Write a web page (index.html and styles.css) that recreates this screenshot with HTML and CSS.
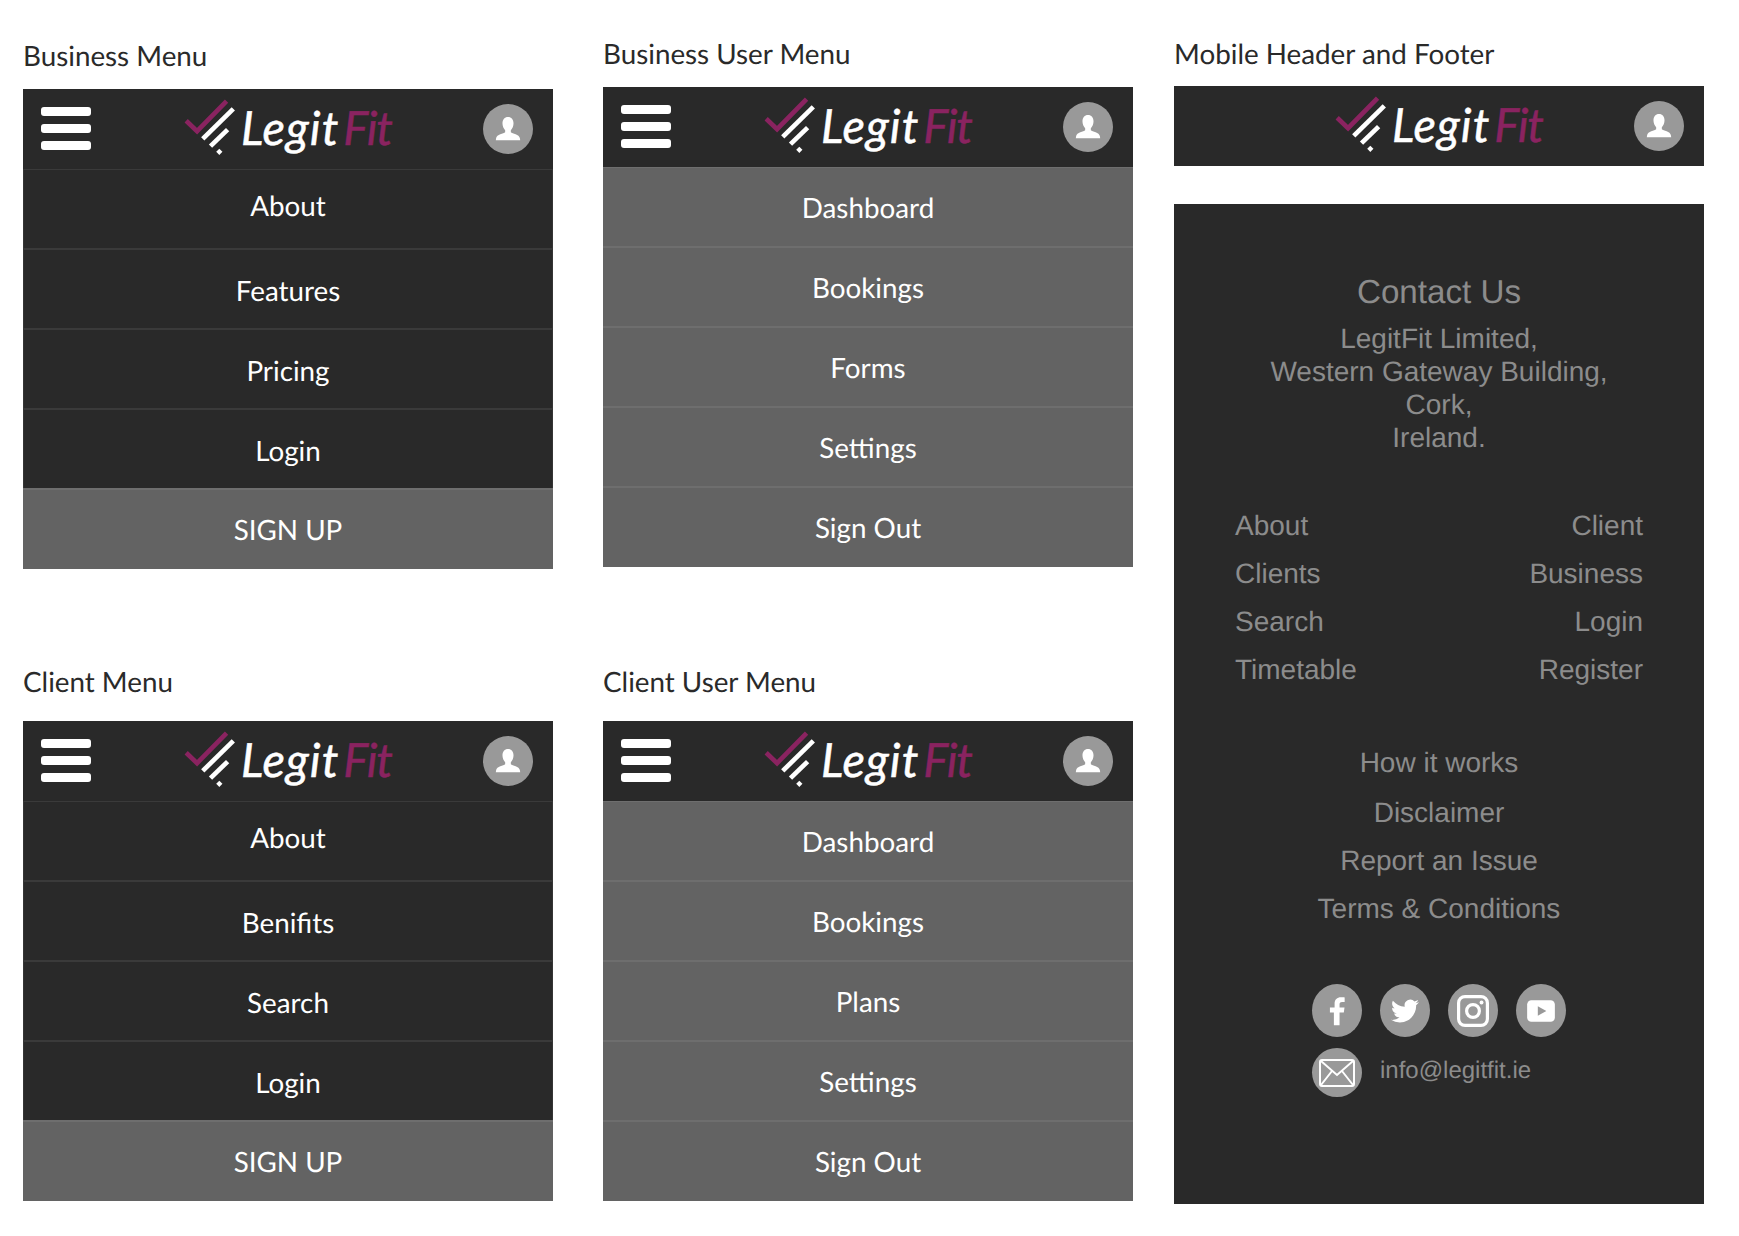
FILE: index.html
```html
<!DOCTYPE html>
<html lang="en">

<head>
    <meta charset="UTF-8">
    <title>LegitFit Menus</title>
    <link rel="stylesheet" href="styles.css">
</head>

<body>
    <svg class="defs" width="0" height="0">
        <symbol id="mark" viewBox="0 0 50 56">
            <path d="M2 22 L12.500 32 L41 3" fill="none" stroke="#8a2360" stroke-width="4.500" />
            <path d="M18 39.500 L47.500 10.500" fill="none" stroke="#fff" stroke-width="4.500" />
            <path d="M25.500 46.500 L42 30.500" fill="none" stroke="#fff" stroke-width="4.500" />
            <path d="M34 49 L37 52 L34 55 L31 52 Z" fill="#fff" />
        </symbol>
        <symbol id="person" viewBox="0 0 24 24">
            <path d="M12 3.500c-2.400 0-3.900 1.900-3.900 4.500 0 2 .8 3.700 1.900 4.800v1.500c-1 1-6 1.500-6.400 4.200l-.2 1.500h17.200l-.2-1.500c-.4-2.700-5.400-3.200-6.400-4.200v-1.500c1.100-1.100 1.900-2.800 1.900-4.800 0-2.600-1.500-4.500-3.900-4.500z" fill="#fff" />
        </symbol>
    </svg>

    <div class="page">
        <div class="col col-one">
            <h2 class="label">Business Menu</h2>
            <div class="panel">
                <header class="bar">
                    <div class="burger"><span></span><span></span><span></span></div>
                    <div class="logo">
                        <svg class="mark"><use href="#mark" /></svg>
                        <span class="legit">Legit</span><span class="fit">Fit</span>
                    </div>
                    <div class="avatar"><svg><use href="#person" /></svg></div>
                </header>
                <a class="row first">About</a>
                <a class="row">Features</a>
                <a class="row">Pricing</a>
                <a class="row">Login</a>
                <a class="row light">SIGN UP</a>
            </div>

            <h2 class="label label-low">Client Menu</h2>
            <div class="panel">
                <header class="bar">
                    <div class="burger"><span></span><span></span><span></span></div>
                    <div class="logo">
                        <svg class="mark"><use href="#mark" /></svg>
                        <span class="legit">Legit</span><span class="fit">Fit</span>
                    </div>
                    <div class="avatar"><svg><use href="#person" /></svg></div>
                </header>
                <a class="row first">About</a>
                <a class="row">Benifits</a>
                <a class="row">Search</a>
                <a class="row">Login</a>
                <a class="row light">SIGN UP</a>
            </div>
        </div>

        <div class="col col-two">
            <h2 class="label">Business User Menu</h2>
            <div class="panel">
                <header class="bar">
                    <div class="burger"><span></span><span></span><span></span></div>
                    <div class="logo">
                        <svg class="mark"><use href="#mark" /></svg>
                        <span class="legit">Legit</span><span class="fit">Fit</span>
                    </div>
                    <div class="avatar"><svg><use href="#person" /></svg></div>
                </header>
                <a class="row light top">Dashboard</a>
                <a class="row light">Bookings</a>
                <a class="row light">Forms</a>
                <a class="row light">Settings</a>
                <a class="row light">Sign Out</a>
            </div>

            <h2 class="label label-low label-low2">Client User Menu</h2>
            <div class="panel">
                <header class="bar">
                    <div class="burger"><span></span><span></span><span></span></div>
                    <div class="logo">
                        <svg class="mark"><use href="#mark" /></svg>
                        <span class="legit">Legit</span><span class="fit">Fit</span>
                    </div>
                    <div class="avatar"><svg><use href="#person" /></svg></div>
                </header>
                <a class="row light top">Dashboard</a>
                <a class="row light">Bookings</a>
                <a class="row light">Plans</a>
                <a class="row light">Settings</a>
                <a class="row light">Sign Out</a>
            </div>
        </div>

        <div class="col col-three">
            <h2 class="label">Mobile Header and Footer</h2>
            <div class="panel">
                <header class="bar bar-mobile">
                    <div class="logo">
                        <svg class="mark"><use href="#mark" /></svg>
                        <span class="legit">Legit</span><span class="fit">Fit</span>
                    </div>
                    <div class="avatar"><svg><use href="#person" /></svg></div>
                </header>
            </div>

            <footer class="footer">
                <h3>Contact Us</h3>
                <p class="address">LegitFit Limited,<br>Western Gateway Building,<br>Cork,<br>Ireland.</p>

                <div class="links">
                    <div>
                        <a>About</a>
                        <a>Clients</a>
                        <a>Search</a>
                        <a>Timetable</a>
                    </div>
                    <div class="links-right">
                        <a>Client</a>
                        <a>Business</a>
                        <a>Login</a>
                        <a>Register</a>
                    </div>
                </div>

                <div class="more">
                    <a>How it works</a>
                    <a>Disclaimer</a>
                    <a>Report an Issue</a>
                    <a>Terms &amp; Conditions</a>
                </div>

                <div class="social">
                    <div class="circle">
                        <svg class="tall" viewBox="0 0 24 24"><path d="M13.800 22v-9h3l.5-3.500h-3.500V7.300c0-1 .3-1.700 1.800-1.700h1.800V2.400c-.3 0-1.400-.1-2.600-.1-2.700 0-4.500 1.600-4.500 4.600v2.600H7v3.500h2.800v9z" fill="#fff" /></svg>
                    </div>
                    <div class="circle">
                        <svg viewBox="0 0 24 24"><path d="M23.953 4.570a10 10 0 01-2.825.775 4.958 4.958 0 002.163-2.723c-.951.555-2.005.959-3.127 1.184a4.920 4.920 0 00-8.384 4.482C7.690 8.095 4.067 6.130 1.640 3.162a4.822 4.822 0 00-.666 2.475c0 1.710.870 3.213 2.188 4.096a4.904 4.904 0 01-2.228-.616v.060a4.923 4.923 0 003.946 4.827 4.996 4.996 0 01-2.212.085 4.936 4.936 0 004.604 3.417 9.867 9.867 0 01-6.102 2.105c-.390 0-.779-.023-1.170-.067a13.995 13.995 0 007.557 2.209c9.053 0 13.998-7.496 13.998-13.985 0-.210 0-.420-.015-.630A9.935 9.935 0 0024 4.590z" fill="#fff" /></svg>
                    </div>
                    <div class="circle">
                        <svg class="big" viewBox="0 0 30 30">
                            <rect x="1.500" y="1.500" width="27" height="27" rx="6" fill="none" stroke="#fff" stroke-width="3" />
                            <circle cx="15" cy="15" r="6" fill="none" stroke="#fff" stroke-width="3" />
                            <circle cx="23" cy="7" r="1.800" fill="#fff" />
                        </svg>
                    </div>
                    <div class="circle">
                        <svg class="big" viewBox="0 0 30 30">
                            <rect x="2" y="5" width="26" height="20" rx="4" fill="#fff" />
                            <path d="M12 10.500 L20 15 L12 19.500 Z" fill="#999" />
                        </svg>
                    </div>
                </div>
                <div class="mail">
                    <div class="circle">
                        <svg class="big" viewBox="0 0 36 28">
                            <rect x="1" y="1" width="34" height="26" rx="2" fill="none" stroke="#fff" stroke-width="2" />
                            <path d="M2 2 L18 16 L34 2 M2 26 L13 12 M34 26 L23 12" fill="none" stroke="#fff" stroke-width="2" />
                        </svg>
                    </div>
                    <span>info@legitfit.ie</span>
                </div>
            </footer>
        </div>
    </div>
</body>

</html>
```

FILE: styles.css
```css
* {
    box-sizing: border-box;
}

body {
    margin: 0;
    background-color: #fff;
    font-family: "Lato", sans-serif;
    text-rendering: geometricPrecision;
}

.defs {
    position: absolute;
}

.page {
    display: flex;
    padding-left: 23px;
}

.col {
    width: 530px;
    flex: none;
}

.col-one {
    padding-top: 40px;
    margin-right: 50px;
}

.col-two {
    padding-top: 38px;
    margin-right: 41px;
}

.col-three {
    padding-top: 38px;
}

.label {
    margin: 0 0 17px;
    height: 32px;
    font-size: 27.800px;
    line-height: 32px;
    font-weight: 400;
    color: #2a2a2a;
}

.col-three .label {
    margin-bottom: 16px;
}

.label-low {
    margin-top: 97px;
    margin-bottom: 23px;
}

.label-low2 {
    margin-top: 99px;
}

/* header bar */
.panel {
    background-color: #292929;
}

.bar {
    height: 80px;
    display: flex;
    align-items: center;
    justify-content: space-between;
    padding: 0 20px 0 18px;
    position: relative;
}

.bar-mobile {
    justify-content: flex-end;
}

.burger {
    width: 50px;
    display: flex;
    flex-direction: column;
    row-gap: 8px;
    margin-top: -2px;
}

.burger span {
    display: block;
    height: 9px;
    background-color: #fff;
    border-radius: 3px;
}

.logo {
    position: absolute;
    left: 162px;
    top: 9px;
    height: 60px;
    display: flex;
    align-items: baseline;
    font-style: italic;
    font-size: 47px;
    line-height: 60px;
    -webkit-text-stroke: 0.5px currentColor;
}

.mark {
    width: 52px;
    height: 58px;
    position: absolute;
    left: -1px;
    top: 0;
}

.legit {
    color: #fff;
    margin-left: 56px;
    letter-spacing: 1px;
}

.fit {
    color: #8a2360;
    margin-left: 4px;
    letter-spacing: -1.200px;
}

.avatar {
    width: 50px;
    height: 50px;
    border-radius: 50%;
    background-color: #999;
    display: flex;
    align-items: center;
    justify-content: center;
}

.avatar svg {
    width: 34px;
    height: 34px;
}

/* menu rows */
.row {
    height: 80px;
    display: flex;
    align-items: center;
    justify-content: center;
    padding-top: 2px;
    font-size: 27.800px;
    color: #fff;
    background-color: #292929;
    border-top: 2px solid #3a3a3a;
    border-left: 1px solid #353535;
    border-right: 1px solid #353535;
}

.row.first {
    height: 79px;
    border-top-width: 1px;
    padding-top: 0;
    padding-bottom: 8px;
}

.row.light {
    padding-top: 0;
    background-color: #636363;
    border-left: 0;
    border-right: 0;
    border-top-color: #6e6e6e;
}

.row.light:last-child {
    height: 81px;
    padding-top: 0;
    padding-bottom: 1px;
}

.row.top {
    height: 79px;
    border-top-width: 1px;
}

/* footer */
.footer {
    margin-top: 38px;
    height: 1000px;
    background-color: #292929;
    color: #8c8c8c;
    font-family: "Liberation Sans", Arial, sans-serif;
    text-align: center;
    padding-top: 67px;
}

.footer h3 {
    margin: 0;
    font-size: 33.200px;
    line-height: 44px;
    font-weight: 400;
}

.address {
    margin: 7px 0 0;
    font-size: 28px;
    line-height: 33px;
}

.links {
    display: flex;
    justify-content: space-between;
    padding: 0 61px;
    margin-top: 48px;
    text-align: left;
}

.links a,
.more a {
    display: block;
    font-size: 28px;
    line-height: 48px;
}

.links-right {
    text-align: right;
}

.more {
    margin-top: 45px;
}

.more a:first-child {
    margin-bottom: 2px;
}

.social {
    display: flex;
    column-gap: 18px;
    margin: 51px 0 0 138px;
}

.circle {
    width: 50px;
    height: 53px;
    border-radius: 50%;
    background-color: #999;
    display: flex;
    align-items: center;
    justify-content: center;
    flex: none;
}

.circle svg {
    width: 28px;
    height: 28px;
}

.circle svg.tall {
    width: 34px;
    height: 34px;
}

.circle svg.big {
    width: 32px;
    height: 32px;
}

.mail {
    display: flex;
    align-items: center;
    column-gap: 18px;
    margin: 11px 0 0 138px;
}

.mail .circle {
    height: 49px;
}

.mail .circle svg.big {
    width: 36px;
}

.mail span {
    font-size: 24px;
    margin-top: -4px;
}
```
